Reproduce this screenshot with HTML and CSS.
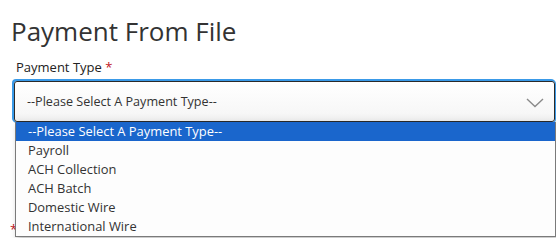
FILE: index.html
```html
<!DOCTYPE html>
<html>
<head>
<meta charset="utf-8">
<link rel="stylesheet" href="styles.css">
</head>
<body>
<div class="page">
  <h1 class="title">Payment From File</h1>
  <div class="field">
    <label class="label">Payment Type <span class="req">*</span></label>
    <div class="select-wrap">
      <div class="select">
        <span class="select-text">--Please Select A Payment Type--</span>
        <svg class="chevron" width="18" height="10" viewBox="0 0 18 10"><path d="M1 1 L9 8.5 L17 1" fill="none" stroke="#8a8a8a" stroke-width="1.4"/></svg>
      </div>
      <ul class="options">
        <li class="opt selected">--Please Select A Payment Type--</li>
        <li class="opt">Payroll</li>
        <li class="opt">ACH Collection</li>
        <li class="opt">ACH Batch</li>
        <li class="opt">Domestic Wire</li>
        <li class="opt">International Wire</li>
      </ul>
    </div>
  </div>
  <div class="field next">
    <span class="req star">*</span>
  </div>
</div>
</body>
</html>
```
FILE: styles.css
```css
html, body { margin: 0; padding: 0; background: #fff; }
body { font-family: "Open Sans", "Liberation Sans", sans-serif; color: #333; }
.page { padding: 13px 0 0 14px; }
.title { margin: 0 0 0 -3px; font-size: 26px; font-weight: 400; line-height: 36px; color: #333; }
.field { margin-top: 9px; }
.label { display: block; font-size: 13px; line-height: 18px; color: #222; padding-left: 2px; margin-bottom: 5px; }
.req { color: #c0141c; }
.select-wrap { position: relative; }
.select {
  box-sizing: border-box; height: 41px; margin-right: 1px;
  border: 1px solid #2a2a2a; border-radius: 3px;
  box-shadow: 0 0 0 1px #3a9ae8, -1px -1px 0 1px #3a9ae8;
  background: linear-gradient(#fff, #f7f7f7 80%, #ececec);
  display: flex; align-items: center; justify-content: space-between; padding: 0 10px 0 12px;
}
.select-text { font-size: 12.6px; color: #333; }
.chevron { display: block; margin-top: 2px; }
.options {
  position: absolute; left: 1px; right: 0; top: 41px; margin: 0; padding: 0; list-style: none;
  background: #fdfdfd; border: 1px solid #7a7a7a; border-top: none;
  box-shadow: 2px 3px 6px rgba(0,0,0,0.25); z-index: 2;
}
.opt { height: 19px; line-height: 19px; font-size: 12.9px; padding-left: 12px; color: #333; }
.opt.selected { background: #1a66cc; color: #fff; }
.next { margin-top: 98px; }
.star { display: block; margin-left: -4px; font-size: 13px; line-height: 18px; }
```
